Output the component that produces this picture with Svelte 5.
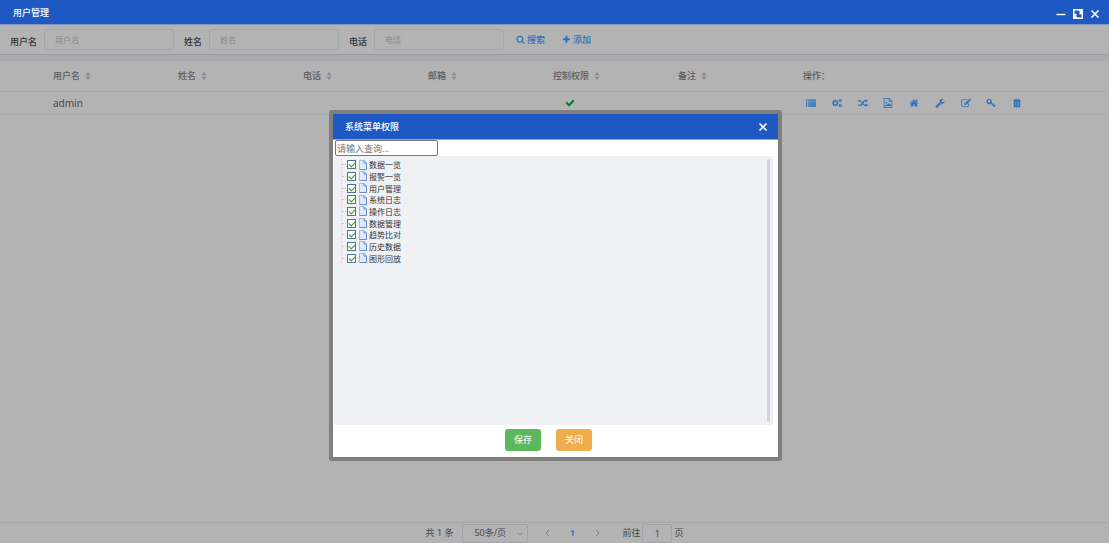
<script>
	const filters = [
		{ id: 'username', label: '用户名' },
		{ id: 'realname', label: '姓名' },
		{ id: 'phone', label: '电话' },
	]

	const columns = ['用户名', '姓名', '电话', '邮箱', '控制权限', '备注']

	const circle = (cx, cy, r) => `M${cx - r} ${cy}a${r} ${r} 0 1 0 ${2 * r} 0a${r} ${r} 0 1 0 ${-2 * r} 0z`

	// cog with eight teeth and a round hole
	const gear = (cx, cy, outer, inner, hole) => {
		const points = []
		for (let i = 0; i < 8; i++) {
			const steps = [[-0.26, inner], [-0.17, outer], [0.17, outer], [0.26, inner]]
			steps.forEach(([offset, r]) => {
				const angle = i * Math.PI / 4 + offset
				points.push(`${Math.round(cx + r * Math.cos(angle))} ${Math.round(cy + r * Math.sin(angle))}`)
			})
		}
		return `M${points.join('L')}z` + circle(cx, cy, hole)
	}

	const icons = {
		search: 'M1216 832q0-185-131.5-316.5t-316.5-131.5-316.5 131.5-131.5 316.5 131.5 316.5 316.5 131.5 316.5-131.5 131.5-316.5zm512 832q0 52-38 90t-90 38q-54 0-90-38l-343-342q-179 124-399 124-143 0-273.5-55.5t-225-150-150-225-55.5-273.5 55.5-273.5 150-225 225-150 273.5-55.5 273.5 55.5 225 150 150 225 55.5 273.5q0 220-124 399l343 343q37 37 37 90z',
		plus: 'M1600 736v192q0 40-28 68t-68 28h-416v416q0 40-28 68t-68 28h-192q-40 0-68-28t-28-68v-416h-416q-40 0-68-28t-28-68v-192q0-40 28-68t68-28h416v-416q0-40 28-68t68-28h192q40 0 68 28t28 68v416h416q40 0 68 28t28 68z',
		check: 'M1671 566q0 40-28 68l-724 724-136 136q-28 28-68 28t-68-28l-136-136-362-362q-28-28-28-68t28-68l136-136q28-28 68-28t68 28l294 295 656-657q28-28 68-28t68 28l136 136q28 28 28 68z',
		list: 'M0 256h256v240H0zM384 256h1408v240H384zM0 608h256v240H0zM384 608h1408v240H384zM0 960h256v240H0zM384 960h1408v240H384zM0 1312h256v240H0zM384 1312h1408v240H384z',
		cogs: gear(600, 896, 620, 470, 230) + gear(1480, 440, 330, 240, 110) + gear(1480, 1352, 330, 240, 110),
		random: 'M0 384h320q170 0 290 190l100 160-120 180-130-210q-60-96-140-96H0zM1408 160l384 320-384 320V608h-160q-90 0-150 100l-300 490q-120 210-320 210H0v-224h430q90 0 150-100l300-490q120-210 320-210h208zM1408 992l384 320-384 320v-224h-190q-180 0-290-190l-80-120 120-200 120 196q60 90 130 90h190z',
		picture: 'M128 0h1024l512 512v1280H128zM270 140v1510h1250V650h-500V140zM1160 210v300h300zM400 1500v-200l190-190 130 130 350-350 330 330v280zM590 650a170 170 0 1 0 0 340 170 170 0 0 0 0-340z',
		home: 'M1472 992v480q0 26-19 45t-45 19h-384v-384h-256v384h-384q-26 0-45-19t-19-45v-480q0-1 .5-3t.5-3l575-474 575 474q1 2 1 6zm223-69l-62 74q-8 9-21 11h-3q-13 0-21-7l-692-577-692 577q-12 8-24 7-13-2-21-11l-62-74q-8-10-7-23.5t11-21.5l719-599q32-26 76-26t76 26l244 204v-195q0-14 9-23t23-9h192q14 0 23 9t9 23v408l219 182q10 8 11 21.5t-7 23.5z',
		wrench: 'M448 1472q0-26-19-45t-45-19-45 19-19 45 19 45 45 19 45-19 19-45zm644-420l-682 682q-37 37-90 37-52 0-91-37l-106-108q-38-36-38-90 0-53 38-91l681-681q39 98 114.5 173.5t173.5 114.5zm634-435q0 39-23 106-47 134-164.5 217.5t-258.5 83.5q-185 0-316.5-131.5t-131.5-316.5 131.5-316.5 316.5-131.5q58 0 121.5 16.5t107.5 46.5q16 11 16 28t-16 28l-293 169v224l193 107q5-3 79-48.5t135.5-81 70.5-35.5q15 0 23.5 10t8.5 25z',
		edit: 'M290 230h830l-140 140H320q-130 0-130 130v800q0 130 130 130h830q130 0 130-130v-220l150-150v400q0 250-250 250H290q-250 0-250-250V480q0-250 250-250zM1390 210l280 280-760 760H630V970zM790 1010l-60 60v90h100l60-60zM1490 110q70-70 140 0l140 140q70 70 0 140l-60 60-280-280z',
		key: circle(580, 640, 480) + circle(560, 600, 230) + 'M1000 860L1170 1030 1290 910 1420 1040 1300 1160 1400 1260 1530 1130 1680 1280 1550 1410 1670 1530 1530 1670 870 1030z',
		trash: 'M640 128h512l90 190h360v150h-130v1050q0 146-130 146H450q-130 0-130-146V468H190V318h360zM720 240l-40 78h432l-40-78zM590 700v700h80V700zM860 700v700h80V700zM1130 700v700h80V700z',
	}

	const actions = [
		{ icon: 'list', title: '菜单权限' },
		{ icon: 'cogs', title: '设置' },
		{ icon: 'random', title: '切换' },
		{ icon: 'picture', title: '图形' },
		{ icon: 'home', title: '首页' },
		{ icon: 'wrench', title: '维护' },
		{ icon: 'edit', title: '编辑' },
		{ icon: 'key', title: '密码' },
		{ icon: 'trash', title: '删除' },
	]

	let menus = $state(
		['数据一览', '报警一览', '用户管理', '系统日志', '操作日志', '数据管理', '趋势比对', '历史数据', '图形回放']
			.map(name => ({ name, checked: true }))
	)

	let showDialog = $state(true)
	let query = $state('')
</script>

{#snippet icon(name)}
	<svg class="icon" viewBox="0 0 1792 1792" aria-hidden="true"><path fill-rule="evenodd" d={icons[name]} /></svg>
{/snippet}

<div class="page">
	<header class="titlebar">
		<h1>用户管理</h1>
		<div class="window-tools">
			<button aria-label="最小化">
				<svg viewBox="0 0 10 10"><path d="M0.5 5.5h9" stroke="#fff" stroke-width="1.4" /></svg>
			</button>
			<button aria-label="最大化">
				<svg viewBox="0 0 10 10">
					<path fill-rule="evenodd" d="M0 0h10v10H0zM1.5 1.5v3.5l1.5-0.5 1 1-1 1.5 1.5 1.5h4v-3.5l-1.5 0.5-1-1 1-1.5L5.5 1.5z" fill="#fff" />
				</svg>
			</button>
			<button aria-label="关闭">
				<svg viewBox="0 0 10 10"><path d="M1.5 1.5l7 7M8.5 1.5l-7 7" stroke="#fff" stroke-width="1.7" /></svg>
			</button>
		</div>
	</header>

	<form class="toolbar" onsubmit={e => e.preventDefault()}>
		{#each filters as filter}
			<div class="field">
				<label for={filter.id}>{filter.label}</label>
				<input id={filter.id} type="text" placeholder={filter.label}>
			</div>
		{/each}
		<button class="link search" type="submit">{@render icon('search')}搜索</button>
		<button class="link" type="button">{@render icon('plus')}添加</button>
	</form>

	<main>
		<table>
			<colgroup>
				<col class="index">
				{#each columns as column}
					<col class="data">
				{/each}
				<col>
			</colgroup>
			<thead>
				<tr>
					<th></th>
					{#each columns as column}
						<th>
							{column}
							<svg class="sort" viewBox="0 0 6 10"><path d="M0 4l3-4 3 4zM0 6h6l-3 4z" /></svg>
						</th>
					{/each}
					<th>操作：</th>
				</tr>
			</thead>
			<tbody>
				<tr>
					<td></td>
					<td class="name">admin</td>
					<td></td>
					<td></td>
					<td></td>
					<td class="allowed">{@render icon('check')}</td>
					<td></td>
					<td>
						<div class="actions">
							{#each actions as action}
								<button aria-label={action.title}>{@render icon(action.icon)}</button>
							{/each}
						</div>
					</td>
				</tr>
			</tbody>
		</table>
	</main>

	<footer>
		<span class="total">共 1 条</span>
		<span class="select">
			<select aria-label="每页条数">
				<option>50条/页</option>
			</select>
			<svg viewBox="0 0 6 4"><path d="M0.5 0.5L3 3l2.5-2.5" /></svg>
		</span>
		<button class="arrow" aria-label="上一页"><svg viewBox="0 0 5 8"><path d="M4 1L1 4l3 3" /></svg></button>
		<button class="current">1</button>
		<button class="arrow" aria-label="下一页"><svg viewBox="0 0 5 8"><path d="M1 1l3 3-3 3" /></svg></button>
		<label class="jump">前往<input type="text" value="1">页</label>
	</footer>
</div>

{#if showDialog}
	<div class="overlay">
		<div class="dialog" role="dialog" aria-labelledby="dialog-title">
			<div class="dialog-header">
				<h2 id="dialog-title">系统菜单权限</h2>
				<button aria-label="关闭" onclick={() => showDialog = false}>
					<svg viewBox="0 0 10 10"><path d="M1.5 1.5l7 7M8.5 1.5l-7 7" stroke="#fff" stroke-width="1.7" /></svg>
				</button>
			</div>
			<input class="query" type="text" aria-label="查询" placeholder="请输入查询..." bind:value={query}>
			<div class="tree">
				<ul>
					{#each menus as menu}
						<li>
							<label>
								<input type="checkbox" bind:checked={menu.checked}>
								<svg class="file" viewBox="0 0 8 10">
									<path d="M0.5 0.5h4.7l2.3 2.4v6.6h-7z" fill="#dfeaff" stroke="#a3bbea" />
									<path d="M5 0.5v2.5h2.5M7.5 3v6.5h-7" fill="none" stroke="#6a8bd0" />
								</svg>
								{menu.name}
							</label>
						</li>
					{/each}
				</ul>
				<div class="scrollbar"></div>
			</div>
			<div class="dialog-footer">
				<button class="save">保存</button>
				<button class="close" onclick={() => showDialog = false}>关闭</button>
			</div>
		</div>
	</div>
{/if}

<style>
	:global(body) {
		margin: 0;
		background: #b3b3b3;
	}

	.page, .overlay {
		font-family: "Noto Sans", "Noto Sans CJK SC", sans-serif;
		font-size: 9px;
		line-height: 12px;
		color: #46484c;
	}

	.page {
		min-height: 100vh;
		display: flex;
		flex-direction: column;
	}

	.page *, .overlay * {
		box-sizing: border-box;
	}

	button, input, select {
		font: inherit;
		color: inherit;
		margin: 0;
	}

	button {
		padding: 0;
		border: 0;
		background: none;
		cursor: pointer;
	}

	svg {
		display: block;
	}

	h1, h2 {
		margin: 0;
		font-size: 9px;
		font-weight: 500;
		color: #fff;
	}

	.icon {
		width: 10px;
		height: 10px;
		fill: currentColor;
	}

	.titlebar {
		display: flex;
		justify-content: space-between;
		align-items: center;
		height: 25px;
		padding: 1px 9px 0 13px;
		background: #1e58c3;
		border-bottom: 1px solid #8097c6;
	}

	.window-tools {
		display: flex;
		gap: 7px;
		padding-top: 2px;
	}

	.window-tools svg, .dialog-header svg {
		width: 10px;
		height: 10px;
	}

	.toolbar {
		display: flex;
		align-items: center;
		height: 30px;
		padding: 0 10px;
		border-bottom: 1px solid #9c9c9c;
		box-shadow: 0 1px 3px #888;
	}

	.field {
		display: flex;
		align-items: center;
		margin-right: 10px;
	}

	.field label {
		padding-top: 4px;
		margin-right: 7px;
		font-weight: 500;
		color: #333;
	}

	.field input {
		width: 130px;
		height: 21px;
		padding: 0 10px;
		background: none;
		border: 1px solid #a3a5a8;
		border-radius: 3px;
	}

	.field input::placeholder {
		font-size: 8px;
		color: #85888d;
	}

	.link {
		display: flex;
		align-items: center;
		gap: 2px;
		margin-right: 17px;
		font-weight: 500;
		color: #2d74bd;
	}

	.link .icon {
		width: 9px;
		height: 9px;
	}

	.search {
		margin-left: 2px;
	}

	main {
		flex: 1;
		border-top: 6px solid #a7abb0;
	}

	table {
		width: 100%;
		table-layout: fixed;
		border-collapse: collapse;
	}

	.index {
		width: 43px;
	}

	.data {
		width: 125px;
	}

	th, td {
		padding: 0 10px;
		text-align: left;
		border-bottom: 1px solid #a8a9ac;
	}

	th {
		height: 30px;
		font-weight: 500;
		color: #5b5d61;
	}

	td {
		height: 23px;
	}

	.name {
		font-size: 10px;
	}

	.sort {
		display: inline-block;
		width: 6px;
		height: 8px;
		margin-left: 3px;
		vertical-align: middle;
		fill: #86898f;
	}

	.allowed {
		padding-left: 22px;
		color: #007d3c;
	}

	.actions {
		display: flex;
		justify-content: space-between;
		max-width: 219px;
		padding-left: 3px;
		color: #2d74bd;
	}

	footer {
		display: flex;
		justify-content: center;
		align-items: center;
		height: 21px;
		border-top: 1px solid #a5a7aa;
	}

	.total {
		margin-right: 9px;
	}

	.select {
		position: relative;
		margin-right: 13px;
	}

	.select select {
		display: block;
		appearance: none;
		width: 66px;
		height: 19px;
		padding: 0 11px;
		background: none;
		border: 1px solid #a0a3a8;
		border-radius: 2px;
	}

	.select svg {
		position: absolute;
		right: 5px;
		top: 8px;
		width: 6px;
		height: 4px;
		pointer-events: none;
	}

	.select path, .arrow path {
		fill: none;
		stroke: #7d8086;
	}

	.arrow {
		width: 12px;
	}

	.arrow svg {
		width: 5px;
		height: 8px;
		margin: 0 auto;
	}

	.current {
		width: 38px;
		font-weight: bold;
		color: #2d7fd6;
	}

	.jump {
		display: flex;
		align-items: center;
		gap: 2px;
		margin-left: 19px;
	}

	.jump input {
		width: 30px;
		height: 19px;
		padding: 0;
		text-align: center;
		background: none;
		border: 1px solid #a0a3a8;
		border-radius: 2px;
	}

	.overlay {
		position: fixed;
		inset: 0;
		display: flex;
		justify-content: center;
		align-items: flex-start;
		padding: 110px 0 0 2px;
	}

	.dialog {
		width: 453px;
		max-width: 100%;
		background: #fff;
		border: 4px solid #7f7f7f;
		border-radius: 3px;
	}

	.dialog-header {
		display: flex;
		justify-content: space-between;
		align-items: center;
		height: 26px;
		padding: 1px 10px 0 12px;
		background: #1e58c3;
		border-bottom: 1px solid #8fa9dd;
	}

	.query {
		display: block;
		width: 103px;
		height: 16px;
		margin-left: 2px;
		padding: 0 1px;
		border: 1px solid #767676;
		border-radius: 2px;
	}

	.query::placeholder {
		color: #757575;
	}

	.tree {
		display: flex;
		justify-content: space-between;
		height: 269px;
		margin: 0 5px 0 1px;
		padding: 3px;
		background: #f0f1f4;
		border-radius: 2px;
	}

	.scrollbar {
		width: 3px;
		background: #d3d5da;
		border-radius: 2px;
	}

	ul {
		display: grid;
		grid-auto-rows: 1fr;
		height: 105px;
		margin: 0 0 0 4px;
		padding: 0;
		list-style: none;
		border-left: 1px dotted #d8d8dc;
	}

	li {
		display: flex;
		align-items: center;
	}

	li::before {
		content: "";
		width: 4px;
		margin-right: 1px;
		border-top: 1px dotted #d0d0d4;
	}

	li label {
		display: flex;
		align-items: center;
		font-size: 8px;
		line-height: 11px;
		color: #333;
	}

	li input {
		appearance: none;
		position: relative;
		width: 9px;
		height: 9px;
		background: #fff;
		border: 1px solid #54738f;
	}

	li input:checked::before {
		content: "";
		position: absolute;
		left: 2px;
		top: 0;
		width: 3px;
		height: 5px;
		border: solid #21a121;
		border-width: 0 1px 1px 0;
		transform: rotate(45deg);
	}

	.file {
		width: 8px;
		height: 10px;
		margin: 0 2px 0 3px;
	}

	.dialog-footer {
		display: flex;
		justify-content: center;
		gap: 15px;
		height: 32px;
		padding: 4px 14px 6px 0;
	}

	.dialog-footer button {
		width: 36px;
		color: #fff;
		border-radius: 3px;
	}

	.save {
		background: #5cb85c;
	}

	.close {
		background: #f0ad4e;
	}
</style>
